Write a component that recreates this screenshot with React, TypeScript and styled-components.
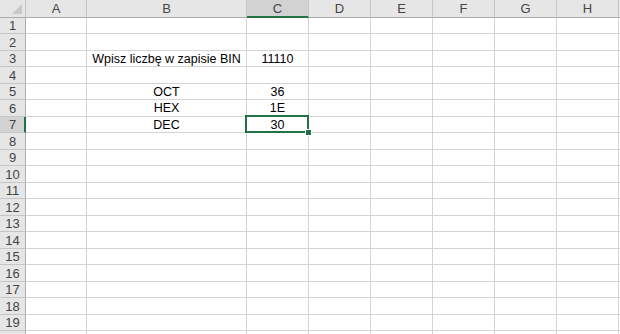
import React from "react";
import styled, { createGlobalStyle, css } from "styled-components";

const GlobalStyle = createGlobalStyle`
    html, body {
        margin: 0;
        padding: 0;
        background: #ffffff;
        overflow: hidden;
    }
    body {
        font-family: "Liberation Sans", Arial, sans-serif;
    }
`;

const COLS = ["A", "B", "C", "D", "E", "F", "G", "H", "I"];
const COL_WIDTHS = [61, 160, 62, 62, 62, 62, 62, 62, 62];
const ROW_COUNT = 20;
const rowHeight = (r: number) => (r % 2 === 1 ? 16 : 17);

const Sheet = styled.div`
    display: grid;
    grid-template-columns: 26px ${COL_WIDTHS.map(w => w + "px").join(" ")};
    grid-template-rows: 18px ${Array.from({ length: ROW_COUNT }, (_, i) => rowHeight(i + 1) + "px").join(" ")};
    width: 620px;
    height: 334px;
    overflow: hidden;
`;

const Corner = styled.div`
    position: relative;
    background: #e6e6e6;
    border-right: 1px solid #c6c6c6;
    border-bottom: 1px solid #ababab;
    box-sizing: border-box;

    &::after {
        content: "";
        position: absolute;
        right: 3px;
        bottom: 3px;
        width: 0;
        height: 0;
        border-left: 10px solid transparent;
        border-bottom: 10px solid #c8c8c8;
    }
`;

const ColHeader = styled.div<{ $active?: boolean }>`
    display: flex;
    align-items: center;
    justify-content: center;
    box-sizing: border-box;
    background: ${p => (p.$active ? "#d2d2d2" : "#e6e6e6")};
    border-right: 1px solid #c6c6c6;
    border-bottom: ${p => (p.$active ? "2px solid #217346" : "1px solid #ababab")};
    color: #444444;
    font-size: 13px;
    padding-top: ${p => (p.$active ? "1px" : "0")};
`;

const RowHeader = styled.div<{ $active?: boolean }>`
    display: flex;
    align-items: center;
    justify-content: center;
    box-sizing: border-box;
    background: ${p => (p.$active ? "#d2d2d2" : "#e6e6e6")};
    border-right: ${p => (p.$active ? "2px solid #217346" : "1px solid #ababab")};
    border-bottom: 1px solid #c6c6c6;
    color: #444444;
    font-size: 13px;
    padding-left: ${p => (p.$active ? "1px" : "0")};
`;

const Cell = styled.div<{ $selected?: boolean }>`
    position: relative;
    display: flex;
    align-items: center;
    justify-content: center;
    box-sizing: border-box;
    border-right: 1px solid #d4d4d4;
    border-bottom: 1px solid #d4d4d4;
    color: #000000;
    font-size: 12.5px;
    white-space: nowrap;

    ${p =>
        p.$selected &&
        css`
            &::before {
                content: "";
                position: absolute;
                left: -2px;
                top: -2px;
                right: -1px;
                bottom: -1px;
                border: 2px solid #217346;
                pointer-events: none;
            }
            &::after {
                content: "";
                position: absolute;
                right: -4px;
                bottom: -4px;
                width: 5px;
                height: 5px;
                background: #217346;
                border: 1px solid #ffffff;
                z-index: 2;
            }
        `}
`;

const data: Record<string, string> = {
    B3: "Wpisz liczbę w zapisie BIN",
    C3: "11110",
    B5: "OCT",
    C5: "36",
    B6: "HEX",
    C6: "1E",
    B7: "DEC",
    C7: "30",
};

const ACTIVE_COL = "C";
const ACTIVE_ROW = 7;

export default function App(): JSX.Element {
    const rows = Array.from({ length: ROW_COUNT }, (_, i) => i + 1);
    return <>
        <GlobalStyle />
        <Sheet>
            <Corner />
            {COLS.map(c => <ColHeader key={c} $active={c === ACTIVE_COL}>{c}</ColHeader>)}
            {rows.map(r => [
                <RowHeader key={"r" + r} $active={r === ACTIVE_ROW}>{r}</RowHeader>,
                ...COLS.map(c => {
                    const id = c + r;
                    return <Cell key={id} $selected={c === ACTIVE_COL && r === ACTIVE_ROW}>{data[id]}</Cell>;
                })
            ])}
        </Sheet>
    </>;
}
